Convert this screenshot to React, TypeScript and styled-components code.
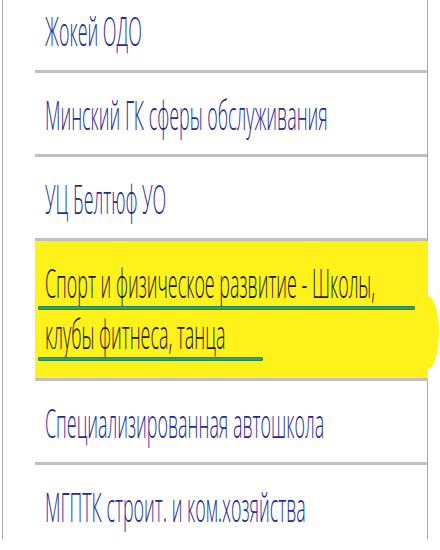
import React from 'react';
import styled, { createGlobalStyle } from 'styled-components';

const Global = createGlobalStyle`
  html, body { margin: 0; padding: 0; background: #ffffff; }
  body { font-family: "Open Sans", "Liberation Sans", Arial, sans-serif; overflow: hidden; }
`;

const Frame = styled.div`
  margin-left: 2px;
  width: 392px;
  height: 550px;
  border-left: 1px solid #a9a9a9;
  border-right: 1px solid #a9a9a9;
  padding-left: 32px;
`;

const List = styled.ul`
  list-style: none;
  margin: -11px 0 0 0;
  padding: 0;
  display: flex;
  flex-direction: column;
`;

const Item = styled.li<{ $active?: boolean }>`
  position: relative;
  padding: 16px 0 14px 10px;
  border-bottom: 3px solid #bfbfbf;
  background: ${(p) => (p.$active ? '#fff21a' : 'transparent')};
  margin-right: ${(p) => (p.$active ? '-1px' : '0')};
  padding-bottom: ${(p) => (p.$active ? '19px' : '14px')};
  &::after {
    content: '';
    display: ${(p) => (p.$active ? 'block' : 'none')};
    position: absolute;
    right: -11px;
    top: 55px;
    width: 22px;
    height: 73px;
    border-radius: 50%;
    background: #fff21a;
  }
`;

const Line = styled.div`
  position: relative;
  height: 51px;
`;

const Text = styled.span<{ $active?: boolean }>`
  display: block;
  font-size: 40px;
  font-weight: 300;
  line-height: 51px;
  white-space: nowrap;
  transform: scaleX(0.447);
  transform-origin: left center;
  color: ${(p) => (p.$active ? '#1a1a1a' : '#1f2b98')};
`;

const Underline = styled.div`
  position: absolute;
  left: -7px;
  top: 49px;
  height: 4px;
  border-radius: 2px;
  background: #35a64e;
  box-shadow: inset 0 0 0 1px #22806c;
`;

const rows: { lines: string[]; active?: boolean; under?: number[] }[] = [
  { lines: ['Жокей ОДО'] },
  { lines: ['Минский ГК сферы обслуживания'] },
  { lines: ['УЦ Белтюф УО'] },
  {
    lines: ['Спорт и физическое развитие - Школы,', 'клубы фитнеса, танца'],
    active: true,
    under: [377, 225],
  },
  { lines: ['Специализированная автошкола'] },
  { lines: ['МГПТК строит. и ком.хозяйства'] },
];

export default function App() {
  return (
    <>
      <Global />
      <Frame>
        <List>
          {rows.map((r, i) => (
            <Item key={i} $active={r.active}>
              {r.lines.map((l, j) => (
                <Line key={j}>
                  <Text $active={r.active}>{l}</Text>
                  {r.under && <Underline style={{ width: r.under[j] }} />}
                </Line>
              ))}
            </Item>
          ))}
        </List>
      </Frame>
    </>
  );
}
